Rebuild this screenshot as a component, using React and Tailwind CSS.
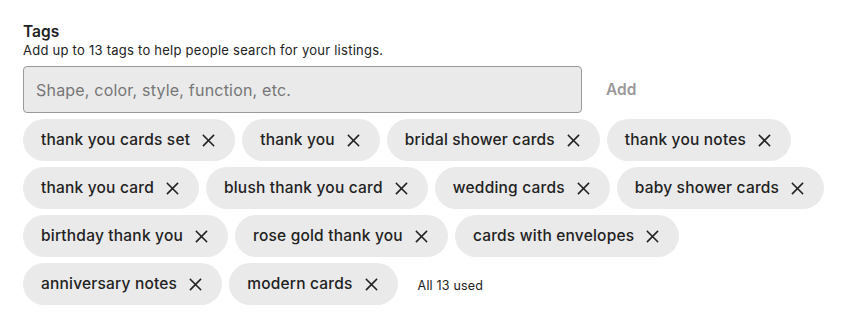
import React from "react";

const tags = [
  "thank you cards set",
  "thank you",
  "bridal shower cards",
  "thank you notes",
  "thank you card",
  "blush thank you card",
  "wedding cards",
  "baby shower cards",
  "birthday thank you",
  "rose gold thank you",
  "cards with envelopes",
  "anniversary notes",
  "modern cards",
];

function XIcon() {
  return (
    <svg width="13" height="13" viewBox="0 0 13 13" fill="none" stroke="#222" strokeWidth="1.6" strokeLinecap="square">
      <path d="M1.5 1.5 L11.5 11.5 M11.5 1.5 L1.5 11.5" />
    </svg>
  );
}

export default function App() {
  return (
    <div className="w-[847px] h-[333px] bg-white pl-[23px] pt-[23px] text-[#222]" style={{ fontFamily: "Inter, 'Noto Sans', sans-serif" }}>
      <div className="text-[15.5px] font-semibold leading-[18px]">Tags</div>
      <div className="text-[13px] tracking-[0.25px] leading-[16px] mt-[1px]">Add up to 13 tags to help people search for your listings.</div>
      <div className="flex items-center mt-[8px]">
        <div className="w-[559px] h-[47px] rounded-[4px] border border-[#9a9a9a] bg-[#eaeaea] flex items-center pl-[12px] text-[16px] tracking-[0.2px] text-[#767676]">
          Shape, color, style, function, etc.
        </div>
        <div className="ml-[24px] text-[15.5px] font-semibold text-[#999]">Add</div>
      </div>
      <div className="flex flex-wrap w-[810px] gap-x-[7px] gap-y-[6px] mt-[6px] items-center">
        {tags.map((t) => (
          <div key={t} className="h-[42px] rounded-full bg-[#eaeaea] flex items-center pl-[18px] pr-[20px] text-[15.5px] tracking-[0.2px] font-medium">
            <span>{t}</span>
            <span className="ml-[12px] flex items-center"><XIcon /></span>
          </div>
        ))}
        <div className="ml-[13px] mt-[4px] text-[12.5px] tracking-[0.2px]">All 13 used</div>
      </div>
    </div>
  );
}
